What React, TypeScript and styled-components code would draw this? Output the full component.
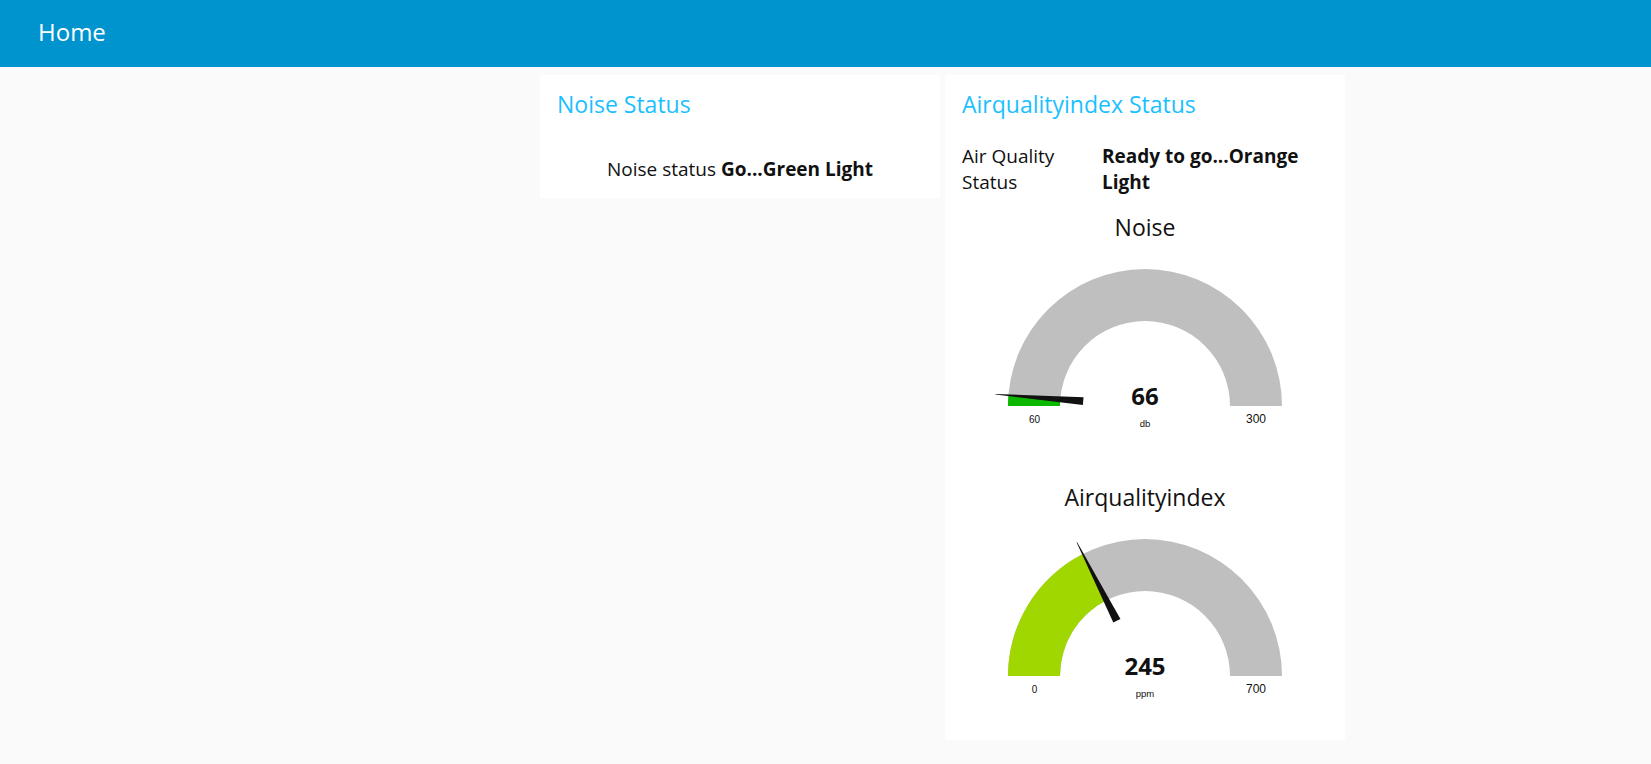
import React from "react";
import styled, { createGlobalStyle } from "styled-components";

const GlobalStyle = createGlobalStyle`
  html, body {
    margin: 0;
    padding: 0;
    background: #fafafa;
    font-family: "Open Sans", "Noto Sans", sans-serif;
    color: #111111;
  }
`;

const Toolbar = styled.header`
  height: 67px;
  background: #0094ce;
  display: flex;
  align-items: center;
  padding-left: 38px;
  box-sizing: border-box;
`;

const ToolbarTitle = styled.h1`
  margin: 0;
  font-size: 24px;
  font-weight: 400;
  color: #ffffff;
  line-height: 30px;
  padding-bottom: 4px;
`;

const Content = styled.main`
  display: flex;
  align-items: flex-start;
  gap: 5px;
  padding: 8px 0 0 540px;
`;

const Card = styled.section<{ $padBottom: number }>`
  width: 400px;
  background: #ffffff;
  box-sizing: border-box;
  padding: 14px 0 ${(p) => p.$padBottom}px;
`;

const CardTitle = styled.h2`
  margin: 0;
  padding: 0 17px;
  font-size: 23px;
  font-weight: 400;
  line-height: 30px;
  color: #1bbfff;
`;

const CenterText = styled.p`
  margin: 37px 0 0;
  font-size: 19px;
  line-height: 26px;
  text-align: center;
`;

const StatusRow = styled.div`
  display: grid;
  grid-template-columns: 140px 1fr;
  padding: 0 17px;
  margin-top: 24px;
  font-size: 19px;
  line-height: 26px;
`;

const StatusValue = styled.span`
  font-weight: 700;
`;

const Gauges = styled.div`
  display: flex;
  flex-direction: column;
  gap: 10px;
  margin-top: 15px;
`;

const GaugeSvg = styled.svg`
  display: block;
  width: 400px;
  height: 260px;
`;

type GaugeProps = {
  title: string;
  value: number;
  min: number;
  max: number;
  units: string;
};

const mix = (a: number, b: number, t: number) => Math.round(a + (b - a) * t);

function levelColor(frac: number) {
  const cols = [
    [0, 181, 0],
    [230, 230, 0],
    [202, 56, 56],
  ];
  const seg = frac < 0.5 ? 0 : 1;
  const t = frac < 0.5 ? frac / 0.5 : (frac - 0.5) / 0.5;
  const a = cols[seg];
  const b = cols[seg + 1];
  return `rgb(${mix(a[0], b[0], t)},${mix(a[1], b[1], t)},${mix(a[2], b[2], t)})`;
}

const CX = 200;
const CY = 196;
const RO = 137;
const RI = 85;

const pt = (r: number, a: number) => [CX + r * Math.cos(a), CY - r * Math.sin(a)];

function sector(frac: number) {
  const a0 = Math.PI;
  const a1 = Math.PI * (1 - frac);
  const [ox0, oy0] = pt(RO, a0);
  const [ox1, oy1] = pt(RO, a1);
  const [ix1, iy1] = pt(RI, a1);
  const [ix0, iy0] = pt(RI, a0);
  return `M${ox0} ${oy0} A${RO} ${RO} 0 0 1 ${ox1} ${oy1} L${ix1} ${iy1} A${RI} ${RI} 0 0 0 ${ix0} ${iy0} Z`;
}

function needle(frac: number) {
  const a = Math.PI * (1 - frac);
  const nx = Math.sin(a);
  const ny = Math.cos(a);
  const [bx, by] = pt(62, a);
  const [tx, ty] = pt(150, a);
  const w = 4;
  const tw = 0.3;
  return [
    [bx + nx * w, by + ny * w],
    [tx + nx * tw, ty + ny * tw],
    [tx - nx * tw, ty - ny * tw],
    [bx - nx * w, by - ny * w],
  ]
    .map((p) => p.map((v) => v.toFixed(2)).join(","))
    .join(" ");
}

function Gauge({ title, value, min, max, units }: GaugeProps) {
  const frac = Math.max(0, Math.min(1, (value - min) / (max - min)));
  return (
    <GaugeSvg viewBox="0 0 400 260">
      <text
        x={CX}
        y={26}
        textAnchor="middle"
        fontFamily="'Open Sans', sans-serif"
        fontSize={23}
        fill="#111111"
      >
        {title}
      </text>
      <path d={sector(1)} fill="#bfbfbf" />
      <path d={sector(frac)} fill={levelColor(frac)} />
      <polygon points={needle(frac)} fill="#111111" />
      <text
        x={CX}
        y={CY - 1}
        textAnchor="middle"
        fontFamily="'Open Sans', sans-serif"
        fontWeight={700}
        fontSize={24}
        fill="#111111"
      >
        {value}
      </text>
      <text
        x={CX}
        y={CY + 21}
        textAnchor="middle"
        fontFamily="'Liberation Sans', Arial, sans-serif"
        fontSize={9.5}
        fill="#111111"
      >
        {units}
      </text>
      <text
        x={CX - (RO + RI) / 2 + 0.5}
        y={CY + 17}
        textAnchor="middle"
        fontFamily="'Liberation Sans', Arial, sans-serif"
        fontSize={10}
        fill="#111111"
      >
        {min}
      </text>
      <text
        x={CX + (RO + RI) / 2}
        y={CY + 17}
        textAnchor="middle"
        fontFamily="'Liberation Sans', Arial, sans-serif"
        fontSize={12}
        fill="#111111"
      >
        {max}
      </text>
    </GaugeSvg>
  );
}

export default function App() {
  return (
    <>
      <GlobalStyle />
      <Toolbar>
        <ToolbarTitle>Home</ToolbarTitle>
      </Toolbar>
      <Content>
        <Card $padBottom={16}>
          <CardTitle>Noise Status</CardTitle>
          <CenterText>
            Noise status <StatusValue>Go...Green Light</StatusValue>
          </CenterText>
        </Card>
        <Card $padBottom={0}>
          <CardTitle>Airqualityindex Status</CardTitle>
          <StatusRow>
            <span>Air Quality Status</span>
            <StatusValue>Ready to go...Orange Light</StatusValue>
          </StatusRow>
          <Gauges>
            <Gauge title="Noise" value={66} min={60} max={300} units="db" />
            <Gauge title="Airqualityindex" value={245} min={0} max={700} units="ppm" />
          </Gauges>
        </Card>
      </Content>
    </>
  );
}
